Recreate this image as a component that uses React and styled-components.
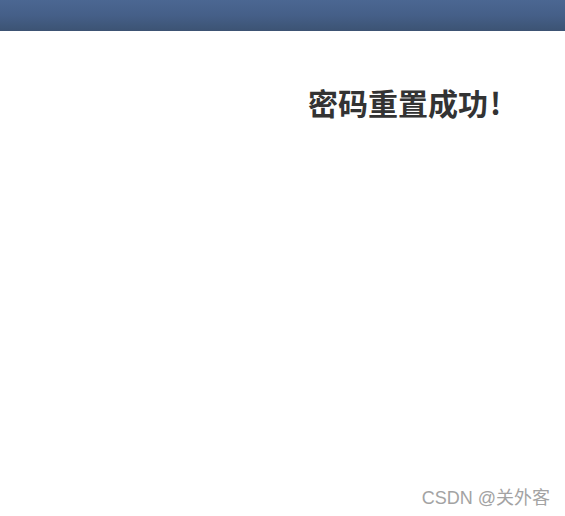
import React from 'react';
import styled, { createGlobalStyle } from 'styled-components';

const GlobalStyle = createGlobalStyle`
  html, body, #root {
    margin: 0;
    height: 100%;
  }
  body {
    background: #fff;
    font-family: "Noto Sans CJK SC", "Liberation Sans", sans-serif;
  }
`;

const Page = styled.div`
  position: relative;
  min-height: 100%;
  display: flex;
  flex-direction: column;
`;

const TopBar = styled.header`
  height: 31px;
  background: linear-gradient(to bottom, #4b6792 0%, #455f88 50%, #3c5373 100%);
`;

const Content = styled.main`
  display: flex;
  justify-content: flex-end;
  padding: 53px 64px 0 0;
`;

const Title = styled.h1`
  margin: 0;
  font-family: "Microsoft YaHei", "Noto Sans CJK SC", sans-serif;
  font-size: 30px;
  font-weight: 700;
  line-height: 36px;
  color: #333;
`;

const Bang = styled.span`
  margin-left: 2px;
`;

const Watermark = styled.span`
  position: absolute;
  right: 15px;
  bottom: 7px;
  font-family: "Liberation Sans", "Noto Sans CJK SC", sans-serif;
  font-size: 18px;
  color: #a3a3a3;
`;

export default function App() {
  return (
    <>
      <GlobalStyle />
      <Page>
        <TopBar />
        <Content>
          <Title>
            密码重置成功<Bang>!</Bang>
          </Title>
        </Content>
        <Watermark>CSDN @关外客</Watermark>
      </Page>
    </>
  );
}
